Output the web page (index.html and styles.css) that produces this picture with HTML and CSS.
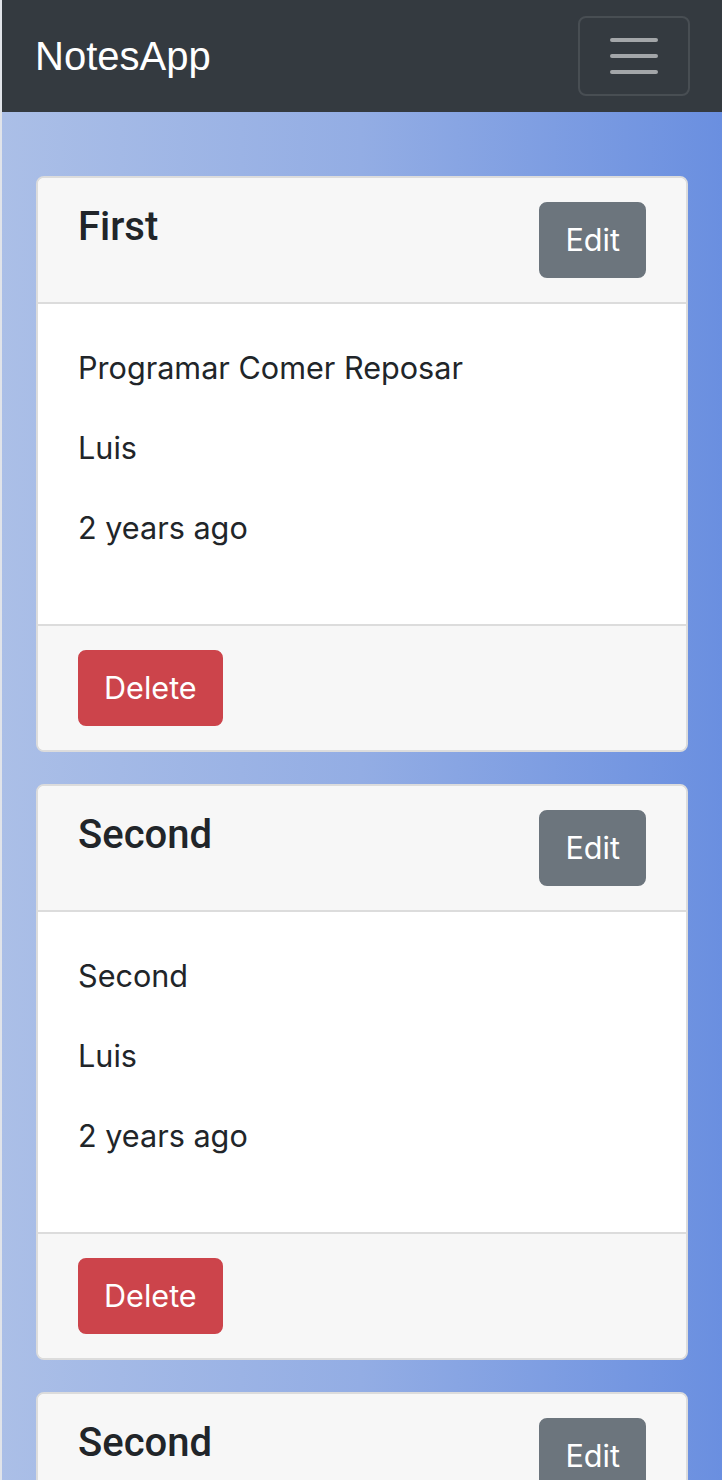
FILE: index.html
```html
<!DOCTYPE html>
<html lang="en">
<head>
<meta charset="utf-8">
<title>NotesApp</title>
<link rel="stylesheet" href="styles.css">
</head>
<body>
<nav class="navbar">
  <a class="brand" href="#">NotesApp</a>
  <button class="toggler" type="button" aria-label="Toggle navigation">
    <svg width="60" height="60" viewBox="0 0 30 30"><path d="M4 7h22M4 15h22M4 23h22" stroke="rgba(255,255,255,0.55)" stroke-width="2" stroke-linecap="round" fill="none"/></svg>
  </button>
</nav>
<main class="container">
  <div class="card">
    <div class="card-header">
      <h5 class="card-title">First</h5>
      <a class="btn btn-secondary" href="#">Edit</a>
    </div>
    <div class="card-body">
      <p>Programar Comer Reposar</p>
      <p>Luis</p>
      <p>2 years ago</p>
    </div>
    <div class="card-footer">
      <button class="btn btn-danger" type="button">Delete</button>
    </div>
  </div>
  <div class="card">
    <div class="card-header">
      <h5 class="card-title">Second</h5>
      <a class="btn btn-secondary" href="#">Edit</a>
    </div>
    <div class="card-body">
      <p>Second</p>
      <p>Luis</p>
      <p>2 years ago</p>
    </div>
    <div class="card-footer">
      <button class="btn btn-danger" type="button">Delete</button>
    </div>
  </div>
  <div class="card">
    <div class="card-header">
      <h5 class="card-title">Second</h5>
      <a class="btn btn-secondary" href="#">Edit</a>
    </div>
    <div class="card-body">
      <p>Second</p>
      <p>Luis</p>
      <p>2 years ago</p>
    </div>
    <div class="card-footer">
      <button class="btn btn-danger" type="button">Delete</button>
    </div>
  </div>
</main>
</body>
</html>
```

FILE: styles.css
```css
* { box-sizing: border-box; }
html, body { margin: 0; padding: 0; }
body {
  height: 1480px;
  overflow: hidden;
  font-family: Inter, "Liberation Sans", Arial, sans-serif;
  font-size: 30.6px;
  line-height: 48px;
  color: #212529;
  background: linear-gradient(90deg, #abbfe7 0%, #93ade4 50%, #6a8fe0 100%);
  border-left: 2px solid #e1e4ea;
}
.navbar {
  height: 112px;
  background: #343a40;
  display: flex;
  align-items: center;
  justify-content: space-between;
  padding: 0 32px 0 33px;
}
.brand {
  font-family: "Liberation Sans", Arial, sans-serif;
  font-size: 40px;
  color: #fff;
  text-decoration: none;
  line-height: 60px;
}
.toggler {
  width: 112px;
  height: 80px;
  padding: 8px 24px;
  background: transparent;
  border: 2px solid rgba(255,255,255,0.1);
  border-radius: 8px;
  display: flex;
  align-items: center;
  justify-content: center;
}
.toggler svg { display: block; }
.container {
  padding: 64px 34px 0 34px;
}
.card {
  background: #fff;
  border: 2px solid #dcdcdc;
  border-radius: 8px;
  margin-bottom: 32px;
  overflow: hidden;
}
.card-header {
  background: #f7f7f7;
  border-bottom: 2px solid #dcdcdc;
  padding: 24px 40px 24px 40px;
  display: flex;
  justify-content: space-between;
  align-items: flex-start;
}
.card-title {
  margin: 0;
  font-family: Roboto, "Liberation Sans", Arial, sans-serif;
  font-weight: 500;
  font-size: 40px;
  line-height: 48px;
  padding-top: 1px;
}
.card-body {
  padding: 40px 40px 8px 40px;
}
.card-body p {
  margin: 0 0 32px 0;
}
.card-body::after {
  content: "";
  display: block;
  height: 32px;
}
.card-footer {
  background: #f7f7f7;
  border-top: 2px solid #dcdcdc;
  padding: 24px 40px 24px 40px;
}
.btn {
  display: inline-block;
  font-family: Inter, "Liberation Sans", Arial, sans-serif;
  font-size: 30.6px;
  line-height: 48px;
  height: 76px;
  padding: 12px 24px;
  border: 2px solid transparent;
  border-radius: 8px;
  color: #fff;
  text-decoration: none;
  cursor: pointer;
}
.btn-secondary { background: #6c757d; border-color: #6c757d; }
.btn-danger { background: #cc444b; border-color: #cc444b; }
```
